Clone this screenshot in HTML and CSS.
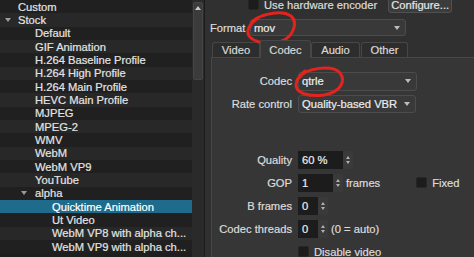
FILE: index.html
```html
<!DOCTYPE html>
<html>
<head>
<meta charset="UTF-8">
<title>Export</title>
<link rel="stylesheet" href="styles.css">
</head>
<body>
<div class="win">
  <div class="tree">
    <div class="row"><span class="lbl l0">Custom</span></div>
    <div class="row"><span class="twisty t0"></span><span class="lbl">Stock</span></div>
    <div class="row"><span class="lbl l1">Default</span></div>
    <div class="row"><span class="lbl l1">GIF Animation</span></div>
    <div class="row"><span class="lbl l1">H.264 Baseline Profile</span></div>
    <div class="row"><span class="lbl l1">H.264 High Profile</span></div>
    <div class="row"><span class="lbl l1">H.264 Main Profile</span></div>
    <div class="row"><span class="lbl l1">HEVC Main Profile</span></div>
    <div class="row"><span class="lbl l1">MJPEG</span></div>
    <div class="row"><span class="lbl l1">MPEG-2</span></div>
    <div class="row"><span class="lbl l1">WMV</span></div>
    <div class="row"><span class="lbl l1">WebM</span></div>
    <div class="row"><span class="lbl l1">WebM VP9</span></div>
    <div class="row"><span class="lbl l1">YouTube</span></div>
    <div class="row"><span class="twisty t1"></span><span class="lbl">alpha</span></div>
    <div class="row sel"><span class="lbl l2">Quicktime Animation</span></div>
    <div class="row"><span class="lbl l2">Ut Video</span></div>
    <div class="row"><span class="lbl l2">WebM VP8 with alpha ch...</span></div>
    <div class="row"><span class="lbl l2">WebM VP9 with alpha ch...</span></div>
  </div>
  <div class="vscroll"><div class="thumb"><span class="up"></span></div></div>
  <div class="main">
    <div class="top-row">
      <span class="check"></span><span class="check-text">Use hardware encoder</span>
      <span class="btn">Configure...</span>
    </div>
    <div class="format-row">
      <span class="flabel">Format</span>
      <div class="combo format-combo"><span class="ctext">mov</span><span class="arrow"></span></div>
    </div>
    <div class="tabs">
      <span class="tab tab-video">Video</span>
      <span class="tab tab-codec active">Codec</span>
      <span class="tab tab-audio">Audio</span>
      <span class="tab tab-other">Other</span>
    </div>
    <div class="pane">
      <div class="frow">
        <span class="flbl">Codec</span>
        <div class="combo codec-combo"><span class="ctext">qtrle</span><span class="arrow"></span></div>
      </div>
      <div class="frow">
        <span class="flbl">Rate control</span>
        <div class="combo rate-combo"><span class="ctext">Quality-based VBR</span><span class="arrow"></span></div>
      </div>
      <div class="spacer"></div>
      <div class="frow">
        <span class="flbl">Quality</span>
        <div class="spin"><span class="field w45">60 %</span><span class="steps"><i class="s-up"></i><i class="s-down"></i></span></div>
      </div>
      <div class="frow">
        <span class="flbl">GOP</span>
        <div class="spin"><span class="field w35">1</span><span class="steps"><i class="s-up"></i><i class="s-down"></i></span></div>
        <span class="after">frames</span>
        <span class="check fixed-check"></span><span class="check-text">Fixed</span>
      </div>
      <div class="frow">
        <span class="flbl">B frames</span>
        <div class="spin"><span class="field w20">0</span><span class="steps"><i class="s-up"></i><i class="s-down"></i></span></div>
      </div>
      <div class="frow">
        <span class="flbl">Codec threads</span>
        <div class="spin"><span class="field w20">0</span><span class="steps"><i class="s-up"></i><i class="s-down"></i></span></div>
        <span class="after">(0 = auto)</span>
      </div>
      <div class="frow">
        <span class="flbl"></span>
        <span class="check"></span><span class="check-text">Disable video</span>
      </div>
    </div>
  </div>
  <svg class="marks" width="474" height="257" viewBox="0 0 474 257">
    <path d="M250 27 C252 15, 280 9, 291 16 C298 22, 294 36, 282 41 C270 45, 254 43, 249 36 C246 31, 249 24, 258 18"/>
    <path d="M299 78 C306 67, 333 65, 340 73 C346 81, 341 92, 324 95 C308 97, 296 93, 296 85 C296 80, 299 76, 305 71"/>
  </svg>
</div>
</body>
</html>
```

FILE: styles.css
```css
*{margin:0;padding:0;box-sizing:border-box}
html,body{height:100%;overflow:hidden}
body{background:#303030;font-family:"Liberation Sans",Arial,sans-serif;font-size:11.2px;color:#dcdcdc;-webkit-text-stroke:0.2px currentColor}

.win{display:flex;height:257px;position:relative;overflow:hidden}

/* preset tree */
.tree{width:192px;flex:none;background:#1e1e1e;overflow:hidden;color:#e4e4e4}
.row{height:13.33px;display:flex;align-items:center;white-space:nowrap;overflow:hidden}
.row:nth-child(odd){background:#202020}
.row:nth-child(even){background:#282828}
.row.sel{background:#1e6b8b;color:#fff}
.lbl{white-space:nowrap}
.l0{padding-left:18px}
.l1{padding-left:35px}
.l2{padding-left:52px}
.twisty{flex:none;width:0;height:0;border-left:3px solid transparent;border-right:3px solid transparent;border-top:4px solid #9c9c9c}
.t0{margin-left:5px;margin-right:7px}
.t1{margin-left:21px;margin-right:8px}

.vscroll{width:13px;flex:none;background:#2a2a2a;border-right:1px solid #1c1c1c;padding:2px 1px 0 1px}
.thumb{height:78px;background:#3b3b3b;border:1px solid #454545;border-radius:2px;display:flex;justify-content:center}
.up{width:0;height:0;margin-top:3px;border-left:3px solid transparent;border-right:3px solid transparent;border-bottom:4px solid #c8c8c8}

/* right side */
.main{flex:1;padding-left:5px;display:flex;flex-direction:column;min-width:0}
.top-row{display:flex;align-items:center;height:18px;margin-top:-4px}
.top-row .check{margin-left:38px}
.check{width:11px;height:11px;flex:none;background:#1c1c1c;border:1px solid #262626;border-radius:2px}
.check-text{margin-left:5px;white-space:nowrap}
.btn{margin-left:11px;width:64px;height:17px;display:flex;align-items:center;justify-content:center;background:#3c3c3c;border:1px solid #505050;border-radius:3px;color:#e6e6e6}

.format-row{display:flex;align-items:center;height:17px;margin-top:6px}
.flabel{width:40px}
.combo{position:relative;display:flex;align-items:center;background:#393939;border:1px solid #4c4c4c;border-radius:3px;color:#ececec}
.ctext{padding-left:3px}
.arrow{position:absolute;right:5px;top:50%;margin-top:-2px;width:0;height:0;border-left:3px solid transparent;border-right:3px solid transparent;border-top:4px solid #bdbdbd}
.format-combo{width:156px;height:17px}

.tabs{display:flex;align-items:flex-end;height:17px;margin-top:4px;margin-left:2px}
.tab{height:15px;display:flex;align-items:center;justify-content:center;background:#2d2d2d;border:1px solid #474747;border-bottom:none;border-radius:3px 3px 0 0;color:#d8d8d8}
.tab.active{height:18px;margin-bottom:-1px;background:#363636;position:relative;z-index:1}
.tab-video{width:48px}
.tab-codec{width:51px}
.tab-audio{width:49px;margin-right:1px}
.tab-other{width:47px}

.pane{flex:1;margin-left:1px;margin-right:-10px;background:#363636;border:1px solid #474747;padding-top:11.5px}
.frow{display:flex;align-items:center;height:23px}
.flbl{width:80px;flex:none;text-align:right;margin-right:6px;white-space:nowrap}
.codec-combo{width:119px;height:19px}
.rate-combo{width:118px;height:18px}
.spacer{height:32.5px}

.spin{display:flex;height:18px}
.field{display:flex;align-items:center;padding-left:4px;background:#1c1c1c;color:#eee}
.w45{width:45px}
.w35{width:35px}
.w20{width:20px}
.steps{width:10px;display:flex;flex-direction:column;align-items:center;justify-content:center;gap:2px;background:#3a3a3a;border-radius:2px}
.steps i{width:0;height:0;border-left:2.5px solid transparent;border-right:2.5px solid transparent}
.s-up{border-bottom:3px solid #b0b0b0}
.s-down{border-top:3px solid #b0b0b0}
.after{margin-left:3px;white-space:nowrap}
.fixed-check{margin-left:36px}

.marks{position:absolute;left:0;top:0;pointer-events:none}
.marks path{fill:none;stroke:#e3231d;stroke-width:3;stroke-linecap:round;-webkit-text-stroke:0}
```
